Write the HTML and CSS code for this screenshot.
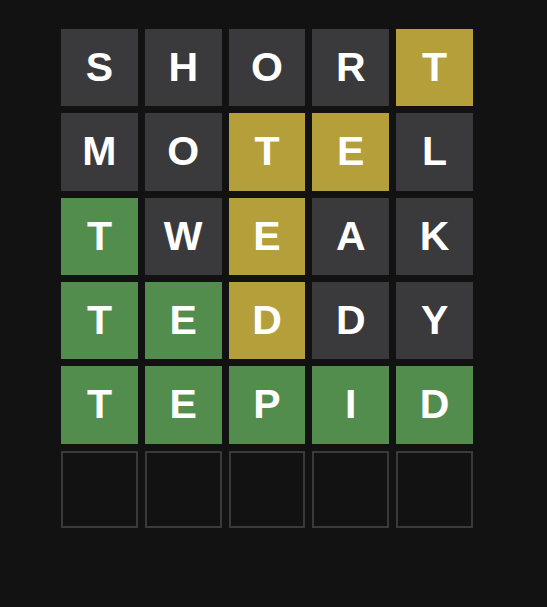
FILE: index.html
```html
<!DOCTYPE html>
<html>
<head>
<meta charset="utf-8">
<link rel="stylesheet" href="styles.css">
</head>
<body>
<div class="board">
  <div class="tile absent">S</div><div class="tile absent">H</div><div class="tile absent">O</div><div class="tile absent">R</div><div class="tile present">T</div>
  <div class="tile absent">M</div><div class="tile absent">O</div><div class="tile present">T</div><div class="tile present">E</div><div class="tile absent">L</div>
  <div class="tile correct">T</div><div class="tile absent">W</div><div class="tile present">E</div><div class="tile absent">A</div><div class="tile absent">K</div>
  <div class="tile correct">T</div><div class="tile correct">E</div><div class="tile present">D</div><div class="tile absent">D</div><div class="tile absent">Y</div>
  <div class="tile correct">T</div><div class="tile correct">E</div><div class="tile correct">P</div><div class="tile correct">I</div><div class="tile correct">D</div>
  <div class="tile empty"></div><div class="tile empty"></div><div class="tile empty"></div><div class="tile empty"></div><div class="tile empty"></div>
</div>
</body>
</html>
```

FILE: styles.css
```css
html, body {
  margin: 0;
  padding: 0;
  background: #121213;
  height: 100%;
}
body {
  font-family: "Liberation Sans", Arial, sans-serif;
}
.board {
  margin: 29px 0 0 61px;
  width: 412px;
  height: 499px;
  display: grid;
  grid-template-columns: repeat(5, 1fr);
  grid-template-rows: repeat(6, 1fr);
  gap: 7px;
}
.tile {
  display: flex;
  align-items: center;
  justify-content: center;
  color: #ffffff;
  font-weight: bold;
  font-size: 41px;
  line-height: 1;
  box-sizing: border-box;
}
.absent { background: #3a3a3c; }
.present { background: #b59f3b; }
.correct { background: #538d4e; }
.empty { border: 2px solid #3a3a3c; }
```
